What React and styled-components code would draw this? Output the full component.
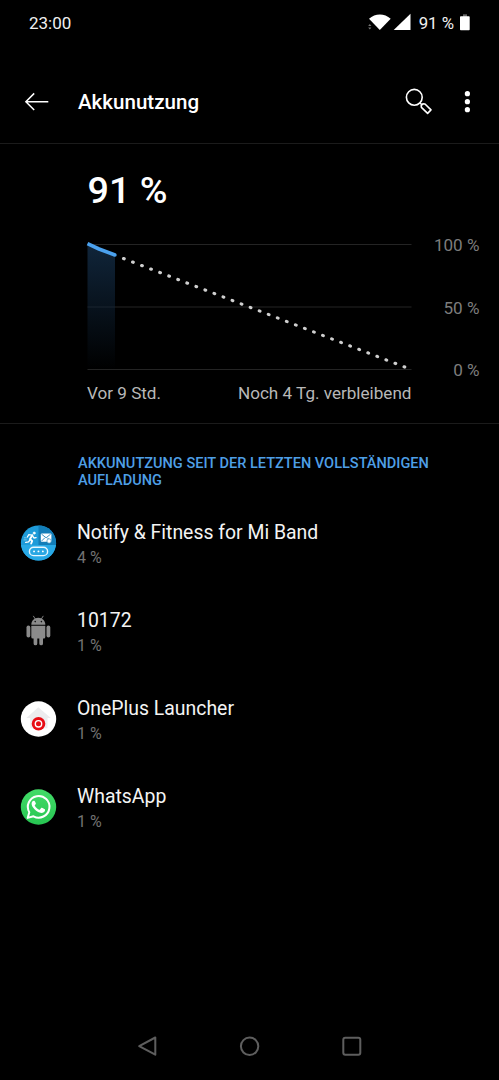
import React from "react";
import styled, { createGlobalStyle } from "styled-components";

const GlobalStyle = createGlobalStyle`
  body { margin: 0; background: #000; }
  svg { display: block; flex: none; overflow: visible; }
`;

const Screen = styled.div`
  display: flex;
  flex-direction: column;
  width: 499px;
  height: 1080px;
  overflow: hidden;
  background: #000;
  color: #fff;
  font-family: Roboto, sans-serif;
`;

const StatusBar = styled.div`
  display: flex;
  align-items: center;
  justify-content: space-between;
  height: 46px;
  padding: 0 29px;
  font-size: 17px;
  color: #f0f0f0;
`;

const StatusIcons = styled.div`
  display: flex;
  align-items: center;
  font-size: 16.8px;
`;

const BatteryText = styled.span`
  margin: 0 6px 0 8px;
`;

const Header = styled.header`
  display: flex;
  align-items: center;
  height: 81px;
  margin-top: 16px;
  padding: 0 20px 0 24px;
  border-bottom: 1px solid #1b1b1b;
`;

const HeaderTitle = styled.h1`
  flex: 1;
  margin: 0 0 0 29px;
  padding-bottom: 1px;
  font-size: 20.55px;
  font-weight: 500;
`;

const Actions = styled.div`
  display: flex;
  align-items: center;
  gap: 22px;
`;

const Usage = styled.section`
  height: 255px;
  padding: 24px 19.5px 0 87px;
  border-bottom: 1px solid #1b1b1b;
`;

const Level = styled.div`
  margin-left: 0.5px;
  font-size: 37.7px;
  font-weight: 500;
  line-height: 44px;
`;

const ChartRow = styled.div`
  display: flex;
  justify-content: space-between;
  height: 146px;
  margin-top: 23px;
`;

const Scale = styled.div`
  display: flex;
  flex-direction: column;
  justify-content: space-between;
  height: 145px;
  text-align: right;
  font-size: 17.1px;
  line-height: 20px;
  color: #7d7d7d;
`;

const TimeAxis = styled.div`
  display: flex;
  justify-content: space-between;
  width: 324.5px;
  margin-top: 2px;
  font-size: 17.1px;
  line-height: 20px;
  color: #b8b8b8;
`;

const SectionTitle = styled.h2`
  margin: 31px 60px 10px 78px;
  font-size: 14.55px;
  font-weight: 500;
  line-height: 17px;
  color: #4e9fe6;
`;

const AppRow = styled.div`
  display: flex;
  align-items: center;
  gap: 20px;
  height: 88px;
  padding-left: 20px;
`;

const AppText = styled.div`
  padding-top: 2px;
`;

const AppName = styled.div`
  font-size: 19.42px;
  line-height: 26px;
  color: #f4f4f4;
`;

const AppShare = styled.div`
  font-size: 16px;
  line-height: 23px;
  color: #727272;
`;

const NavBar = styled.nav`
  display: flex;
  align-items: center;
  justify-content: space-between;
  height: 68px;
  margin-top: auto;
  padding: 0 136px;
`;

const NotifyIcon = () => (
  <svg width="37" height="37" viewBox="0 0 37 37">
    <defs>
      <clipPath id="disc"><circle cx="18.5" cy="18" r="17.6" /></clipPath>
    </defs>
    <g clipPath="url(#disc)">
      <rect width="37" height="37" fill="#1e9bd9" />
      <rect x="18.5" width="19" height="20" fill="#127db8" />
      <rect y="20" width="37" height="17" fill="#28a9e6" />
    </g>
    <g stroke="#fff" fill="none" strokeLinecap="round" strokeLinejoin="round">
      <circle cx="14.2" cy="8.1" r="1.1" fill="#fff" strokeWidth=".6" />
      <path d="M12.4 10.2 10 14.1l2.2 1.8-1 2.6" strokeWidth="1.9" />
      <path d="M12 10.1 8.7 9.7 7.4 12M12.9 11.4l1 1.6 2.2-.4M9.9 14.8 8.6 16.9 5.7 17.3" strokeWidth="1.3" />
      <path d="M4.3 12.8h2M4 14.9h2.3" strokeWidth=".6" opacity=".7" />
    </g>
    <rect x="20.8" y="8.4" width="10.6" height="8.4" rx="1" fill="#fff" />
    <path d="m21.5 9.1 4.6 3.7 4.6-3.7M21.5 16.1l3.3-3.3M30.7 16.1l-3.3-3.3" fill="none" stroke="#2788bb" strokeWidth=".9" />
    <circle cx="29.1" cy="16" r="2.2" fill="#fff" stroke="#3a91bf" strokeWidth=".7" />
    <rect x="9.4" y="22.2" width="18.2" height="8.4" rx="4.2" fill="#2aa7e3" stroke="#e8f7ff" strokeWidth="1.4" />
    <path d="M14 26.4h.1M18.4 26.4h.1M22.8 26.4h.1" stroke="#fff" strokeWidth="1.8" strokeLinecap="round" />
  </svg>
);

const AndroidIcon = () => (
  <svg width="37" height="37" viewBox="0 0 37 37" fill="#8b8b8b">
    <path d="M11.3 11.7c0-4 3-6.9 7-6.9s7 2.9 7 6.9z" />
    <path d="M13.5 3.2l1.8 2.9M23.1 3.2l-1.8 2.9" stroke="#8b8b8b" strokeWidth=".9" strokeLinecap="round" />
    <circle cx="15.2" cy="8.6" r=".8" fill="#111" />
    <circle cx="21.4" cy="8.6" r=".8" fill="#111" />
    <path d="M11.3 12.8h14V24a1.5 1.5 0 0 1-1.5 1.5H23v5a1.85 1.85 0 0 1-3.7 0v-5h-2v5a1.85 1.85 0 0 1-3.7 0v-5h-.8a1.5 1.5 0 0 1-1.5-1.5z" />
    <rect x="6.5" y="12.6" width="3.8" height="11.8" rx="1.9" />
    <rect x="26.5" y="12.6" width="3.8" height="11.8" rx="1.9" />
  </svg>
);

const LauncherIcon = () => (
  <svg width="37" height="37" viewBox="0 0 37 37">
    <circle cx="18.5" cy="18" r="17.7" fill="#fff" />
    <path d="M18.3 6.2 30.8 16.9h-3.3v10.4H10.2V16.9H6.4z" fill="#ececee" />
    <circle cx="18.5" cy="22.8" r="6.8" fill="#e80c14" />
    <circle cx="18.5" cy="22.8" r="3.2" fill="#e80c14" stroke="#fff" strokeWidth="1.4" />
  </svg>
);

const WhatsAppIcon = () => (
  <svg width="37" height="37" viewBox="0 0 37 37">
    <defs>
      <linearGradient id="green" x1="0" y1="0" x2="0" y2="1">
        <stop offset="0" stopColor="#43dc68" />
        <stop offset="1" stopColor="#27c552" />
      </linearGradient>
    </defs>
    <circle cx="18.5" cy="18" r="17.7" fill="url(#green)" />
    <path d="M7.7 28.9l1.6-5.7a10.8 10.8 0 1 1 4.2 4.1z" fill="none" stroke="#fff" strokeWidth="2" strokeLinejoin="round" />
    <path d="M14.8 12.3c-.3-.6-.6-.6-1-.6-1 0-2.2 1.2-2.2 3 0 1.7 1.2 3.4 1.5 3.8 1.7 2.5 4 4.4 7.2 5.3 2.1.6 4.4-.7 4.7-2.2.1-.6.1-1.1-.1-1.3-.4-.3-2.5-1.4-3-1.5-.3-.1-.6 0-.8.3l-1.1 1.4c-.2.3-.5.3-.8.2-2-.9-3.4-2.1-4.4-3.9-.2-.3 0-.6.2-.8.4-.4.9-1 .9-1.4 0-.4-.8-1.9-1.1-2.3z" fill="#fff" />
  </svg>
);

const apps = [
  { name: "Notify & Fitness for Mi Band", share: "4 %", Icon: NotifyIcon },
  { name: "10172", share: "1 %", Icon: AndroidIcon },
  { name: "OnePlus Launcher", share: "1 %", Icon: LauncherIcon },
  { name: "WhatsApp", share: "1 %", Icon: WhatsAppIcon },
];

const BatteryChart = () => (
  <svg width="325" height="146" viewBox="0 0 325 146">
    <defs>
      <linearGradient id="fade" x1="0" y1="0" x2="0" y2="1">
        <stop offset="0" stopColor="#10253a" />
        <stop offset="1" stopColor="#10253a" stopOpacity="0" />
      </linearGradient>
    </defs>
    <path d="M.5 9.5H324.5M.5 72H324.5M.5 134.5H324.5" stroke="#242424" strokeWidth="1.2" />
    <path d="M.5 10 28 20.500V134H.5z" fill="url(#fade)" />
    <path d="M36.5 23.5 321 133.3" stroke="#cfcfcf" strokeWidth="3.1" strokeLinecap="round" strokeDasharray=".8 8.9" />
    <path d="M.5 8.7 12 14 28 20" fill="none" stroke="#4ba1ee" strokeWidth="3.6" strokeLinejoin="round" />
    <circle cx="28" cy="20" r="1.7" fill="#4ba1ee" />
  </svg>
);

export default function App() {
  return (
    <Screen>
      <GlobalStyle />
      <StatusBar>
        <span>23:00</span>
        <StatusIcons>
          <svg width="43" height="18" viewBox="0 0 43 18" fill="#fff">
            <path d="M1 4.7C7.2-1 16.500-1 22.700 4.700L11.8 16z" />
            <path d="M42.500-.3V16H25.700z" />
            <path d="M.2 12 1.8 10 3.4 12zM.2 13.500 1.8 15.500 3.4 13.500z" fill="#777" />
          </svg>
          <BatteryText>91 %</BatteryText>
          <svg width="10" height="18" viewBox="0 0 10 18" fill="#fff">
            <rect x="3" y=".3" width="4" height="3" fill="#666" />
            <rect x="0" y="2.200" width="9.700" height="14" rx=".8" />
          </svg>
        </StatusIcons>
      </StatusBar>
      <Header>
        <svg width="25" height="20" viewBox="0 0 25 20" fill="none" stroke="#fff" strokeWidth="1.5">
          <path d="M24.3 8.7H2M10.2.4 1.9 8.7l8.3 8.3" />
        </svg>
        <HeaderTitle>Akkunutzung</HeaderTitle>
        <Actions>
          <svg width="28" height="28" viewBox="0 0 28 28" fill="none" stroke="#fff" strokeWidth="1.6">
            <circle cx="9.300" cy="8.300" r="7.900" />
            <path d="M15 14 16.800 15.700M16.200 16.600 17.900 14.800 20 15 26 20.900 22.600 24.400 16.400 18.400z" strokeLinejoin="round" />
          </svg>
          <svg width="24" height="24" viewBox="0 0 24 24" fill="#fff">
            <circle cx="12.4" cy="2.7" r="2.6" />
            <circle cx="12.4" cy="10.7" r="2.6" />
            <circle cx="12.4" cy="18.7" r="2.6" />
          </svg>
        </Actions>
      </Header>
      <Usage>
        <Level>91 %</Level>
        <ChartRow>
          <BatteryChart />
          <Scale>
            <span>100 %</span>
            <span>50 %</span>
            <span>0 %</span>
          </Scale>
        </ChartRow>
        <TimeAxis>
          <span>Vor 9 Std.</span>
          <span>Noch 4 Tg. verbleibend</span>
        </TimeAxis>
      </Usage>
      <SectionTitle>AKKUNUTZUNG SEIT DER LETZTEN VOLLSTÄNDIGEN AUFLADUNG</SectionTitle>
      {apps.map(({ name, share, Icon }) => (
        <AppRow key={name}>
          <Icon />
          <AppText>
            <AppName>{name}</AppName>
            <AppShare>{share}</AppShare>
          </AppText>
        </AppRow>
      ))}
      <NavBar>
        <svg width="24" height="24" viewBox="0 0 24 24" fill="none" stroke="#5e5e5e" strokeWidth="2" strokeLinejoin="round">
          <path d="M19.3 3.500V20.700L3.200 12.100z" />
        </svg>
        <svg width="24" height="24" viewBox="0 0 24 24" fill="none" stroke="#5e5e5e" strokeWidth="2">
          <circle cx="11.6" cy="12.3" r="8.7" />
        </svg>
        <svg width="24" height="24" viewBox="0 0 24 24" fill="none" stroke="#5e5e5e" strokeWidth="2">
          <rect x="4.3" y="3.7" width="17" height="17" rx="2" />
        </svg>
      </NavBar>
    </Screen>
  );
}
